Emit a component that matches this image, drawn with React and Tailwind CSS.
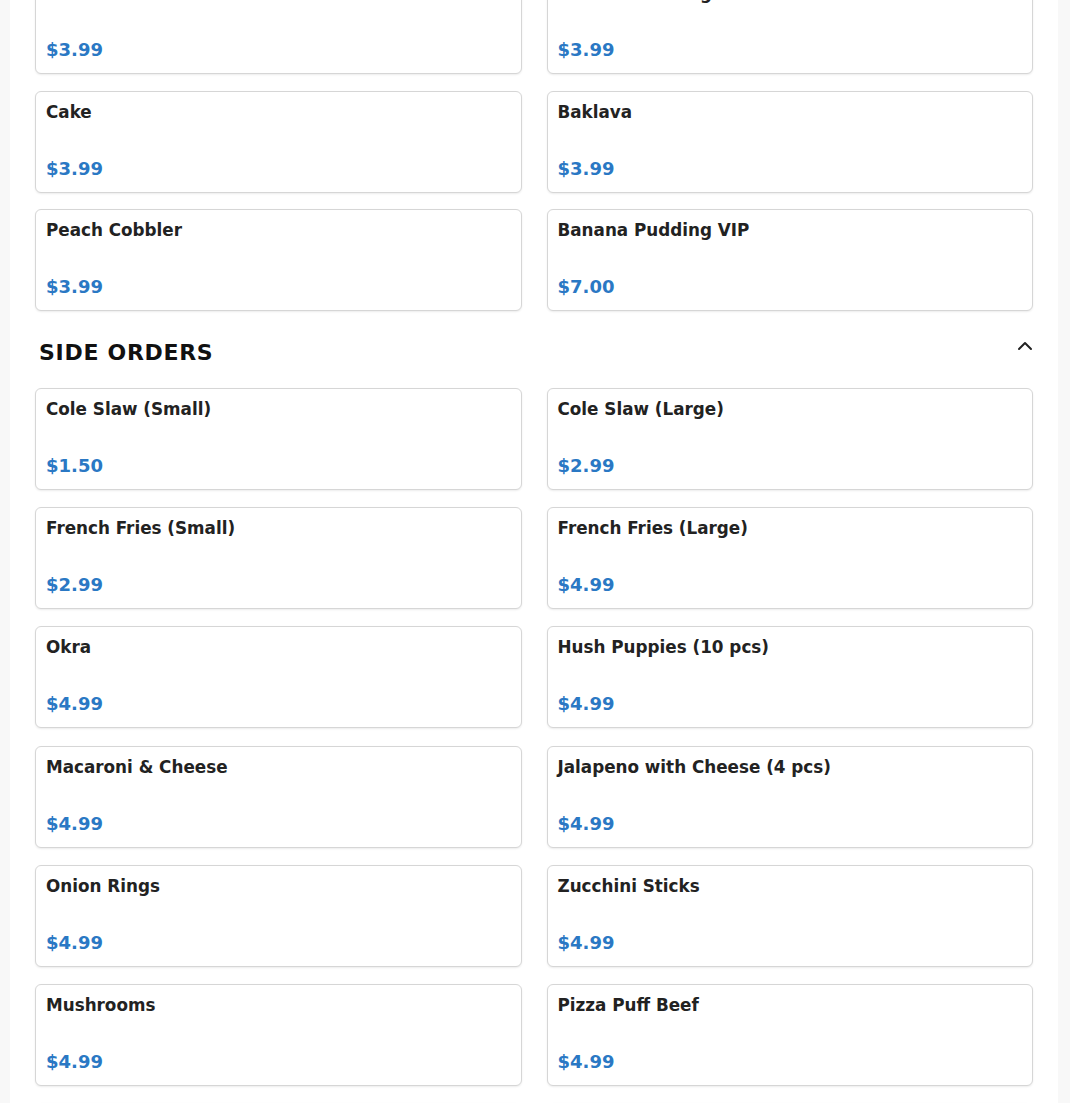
import { ChevronUp } from 'lucide-react'

const desserts = [
  { name: 'Cheesecake', price: '3.99' },
  { name: 'Banana Pudding', price: '3.99' },
  { name: 'Cake', price: '3.99' },
  { name: 'Baklava', price: '3.99' },
  { name: 'Peach Cobbler', price: '3.99' },
  { name: 'Banana Pudding VIP', price: '7.00' },
]

const sides = [
  { name: 'Cole Slaw (Small)', price: '1.50' },
  { name: 'Cole Slaw (Large)', price: '2.99' },
  { name: 'French Fries (Small)', price: '2.99' },
  { name: 'French Fries (Large)', price: '4.99' },
  { name: 'Okra', price: '4.99' },
  { name: 'Hush Puppies (10 pcs)', price: '4.99' },
  { name: 'Macaroni & Cheese', price: '4.99' },
  { name: 'Jalapeno with Cheese (4 pcs)', price: '4.99' },
  { name: 'Onion Rings', price: '4.99' },
  { name: 'Zucchini Sticks', price: '4.99' },
  { name: 'Mushrooms', price: '4.99' },
  { name: 'Pizza Puff Beef', price: '4.99' },
  { name: 'Pizza Puff Chicken', price: '4.99' },
  { name: 'Chicken Tenders', price: '4.99' },
]

function ItemCard({ item }) {
  return (
    <div className="h-[102px] flex flex-col justify-between rounded-md border border-[#d6d6d6] bg-white px-[10px] pt-[8px] pb-[9px] shadow-[0_1px_2px_rgba(0,0,0,0.08)]">
      <div className="text-[16.8px] leading-[24px] font-bold text-[#222]">{item.name}</div>
      <div className="text-[18px] leading-[28px] font-bold text-[#2a78c4]">${item.price}</div>
    </div>
  )
}

export default function App() {
  return (
    <div
      className="h-[1103px] overflow-hidden bg-[#f8f8f8]"
      style={{ fontFamily: '"DejaVu Sans", sans-serif' }}
    >
      <div className="ml-[10px] mr-[12px] min-h-full bg-white px-[25px]">
        <div className="grid grid-cols-2 gap-x-[25px] gap-y-[16.5px] -mt-[28px]">
          {desserts.map((item, i) => (
            <ItemCard key={i} item={item} />
          ))}
        </div>

        <div className="flex items-center justify-between pl-[4px] mt-[26px] mb-[19px] h-[32px]">
          <h2 className="text-[22px] leading-[32px] font-bold tracking-[0.7px] text-[#111]">SIDE ORDERS</h2>
          <ChevronUp className="w-[24px] h-[24px] -mt-[14px] -mr-[4px] text-[#222]" strokeWidth={2} />
        </div>

        <div className="grid grid-cols-2 gap-x-[25px] gap-y-[17.2px]">
          {sides.map((item, i) => (
            <ItemCard key={i} item={item} />
          ))}
        </div>
      </div>
    </div>
  )
}
